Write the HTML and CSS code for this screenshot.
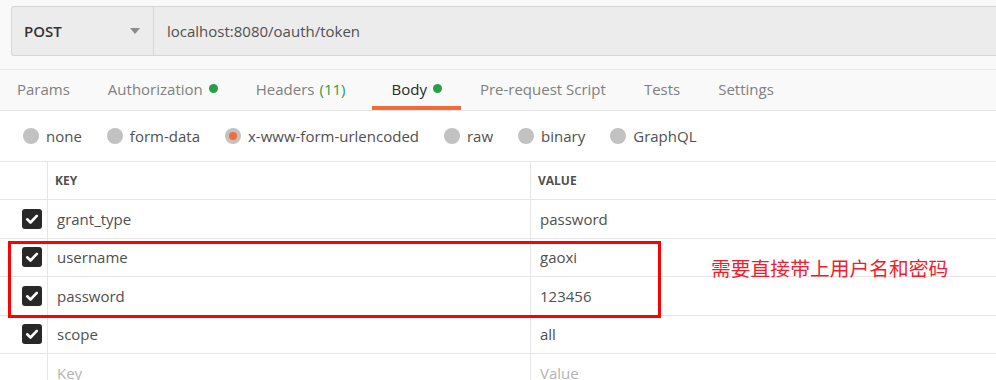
FILE: index.html
```html
<!DOCTYPE html>
<html lang="en">
  <head>
    <meta charset="UTF-8" />
    <title>Request</title>
    <link rel="stylesheet" href="styles.css">
  </head>
  <body>
    <div class="request">
      <div class="url-bar">
        <div class="method">
          <span>POST</span>
          <svg class="caret" width="10" height="6" viewBox="0 0 10 6"><path d="M0 0h10L5 6z" fill="#8c8c8c"/></svg>
        </div>
        <div class="url">localhost:8080/oauth/token</div>
      </div>
    </div>

    <nav class="tabs">
      <span class="tab first">Params</span>
      <span class="tab">Authorization <i class="dot"></i></span>
      <span class="tab headers">Headers <em class="count">(11)</em></span>
      <span class="tab active">Body <i class="dot"></i></span>
      <span class="tab">Pre-request Script</span>
      <span class="tab">Tests</span>
      <span class="tab">Settings</span>
    </nav>

    <div class="body-types">
      <label class="radio"><i class="circle"></i>none</label>
      <label class="radio"><i class="circle"></i>form-data</label>
      <label class="radio"><i class="circle checked"></i>x-www-form-urlencoded</label>
      <label class="radio"><i class="circle"></i>raw</label>
      <label class="radio"><i class="circle"></i>binary</label>
      <label class="radio"><i class="circle"></i>GraphQL</label>
    </div>

    <div class="kv">
      <div class="kv-row head">
        <div class="cell"></div>
        <div class="cell">KEY</div>
        <div class="cell">VALUE</div>
      </div>
      <div class="kv-row">
        <div class="cell check"><span class="box"><svg width="20" height="20" viewBox="0 0 20 20"><path d="M5.2 10.3l3.3 3.2 6.3-6.6" fill="none" stroke="#fff" stroke-width="2.6" stroke-linecap="round" stroke-linejoin="round"/></svg></span></div>
        <div class="cell">grant_type</div>
        <div class="cell">password</div>
      </div>
      <div class="kv-row">
        <div class="cell check"><span class="box"><svg width="20" height="20" viewBox="0 0 20 20"><path d="M5.2 10.3l3.3 3.2 6.3-6.6" fill="none" stroke="#fff" stroke-width="2.6" stroke-linecap="round" stroke-linejoin="round"/></svg></span></div>
        <div class="cell">username</div>
        <div class="cell">gaoxi</div>
      </div>
      <div class="kv-row">
        <div class="cell check"><span class="box"><svg width="20" height="20" viewBox="0 0 20 20"><path d="M5.2 10.3l3.3 3.2 6.3-6.6" fill="none" stroke="#fff" stroke-width="2.6" stroke-linecap="round" stroke-linejoin="round"/></svg></span></div>
        <div class="cell">password</div>
        <div class="cell">123456</div>
      </div>
      <div class="kv-row">
        <div class="cell check"><span class="box"><svg width="20" height="20" viewBox="0 0 20 20"><path d="M5.2 10.3l3.3 3.2 6.3-6.6" fill="none" stroke="#fff" stroke-width="2.6" stroke-linecap="round" stroke-linejoin="round"/></svg></span></div>
        <div class="cell">scope</div>
        <div class="cell">all</div>
      </div>
      <div class="kv-row">
        <div class="cell"></div>
        <div class="cell placeholder">Key</div>
        <div class="cell placeholder">Value</div>
      </div>
    </div>

    <!-- annotation drawn over the screenshot -->
    <div class="note-box"></div>
    <div class="note">需要直接带上用户名和密码</div>
  </body>
</html>
```

FILE: styles.css
```css
body {
  margin: 0;
  font-family: "Open Sans", "Liberation Sans", sans-serif;
  font-size: 15px;
  color: #505050;
  background: #fff;
  overflow: hidden;
}

.request {
  background: #f9f9f9;
  padding: 6px 0 13px 11px;
  border-bottom: 1px solid #e8e8e8;
}

.url-bar {
  display: flex;
  height: 50px;
  box-sizing: border-box;
  background: #ececec;
  border: 1px solid #d6d6d6;
  border-right: none;
  border-radius: 3px 0 0 3px;
}

.method {
  width: 142px;
  border-right: 1px solid #d6d6d6;
  display: flex;
  align-items: center;
  justify-content: space-between;
  padding: 0 12px 0 12px;
  box-sizing: border-box;
  font-weight: 600;
  color: #333;
}

.caret {
  margin-right: 1px;
}

.url {
  display: flex;
  align-items: center;
  padding-left: 13px;
  color: #505050;
}

.tabs {
  display: flex;
  height: 40px;
  background: #f9f9f9;
  border-bottom: 1px solid #e6e6e6;
}

.tab {
  position: relative;
  display: flex;
  align-items: center;
  padding: 0 19px 3px;
  color: #808080;
  white-space: nowrap;
}

.tab.first {
  padding-left: 17px;
}

.tab.headers {
  margin-right: 8px;
}

.tab.active {
  color: #282828;
}

.tab.active::after {
  content: "";
  position: absolute;
  left: 0;
  right: 0;
  bottom: 0;
  height: 4px;
  background: #f26b3a;
}

.dot {
  display: inline-block;
  width: 9px;
  height: 9px;
  border-radius: 50%;
  background: #26a047;
  margin-left: 6px;
}

.count {
  font-style: normal;
  color: #26a047;
  margin-left: 5px;
}

.body-types {
  display: flex;
  align-items: center;
  height: 50px;
  padding-left: 23px;
}

.radio {
  display: flex;
  align-items: center;
  margin-right: 25px;
  color: #505050;
}

.circle {
  width: 16px;
  height: 16px;
  border-radius: 50%;
  background: #c2c2c2;
  margin-right: 7px;
  display: flex;
  align-items: center;
  justify-content: center;
}

.circle.checked::after {
  content: "";
  width: 8px;
  height: 8px;
  border-radius: 50%;
  background: #f26b3a;
}

.kv {
  border-top: 1px solid #e6e6e6;
}

.kv-row {
  display: grid;
  grid-template-columns: 48px 483px 1fr;
  height: 37.5px;
  border-bottom: 1px solid #e6e6e6;
}

.kv-row.head {
  height: 37px;
}

.cell {
  display: flex;
  align-items: center;
  padding-left: 9px;
  border-right: 1px solid #e6e6e6;
}

.cell:last-child {
  border-right: none;
}

.head .cell {
  font-size: 12px;
  font-weight: 700;
  padding-left: 7px;
  color: #505050;
}

.cell.check {
  padding-left: 22px;
}

.box {
  width: 20px;
  height: 20px;
  border-radius: 3px;
  background: #282828;
}

.box svg {
  display: block;
}

.placeholder {
  color: #b3b3b3;
}

.note-box {
  position: absolute;
  left: 8px;
  top: 241px;
  width: 653px;
  height: 77px;
  box-sizing: border-box;
  border: 3px solid #f00;
}

.note {
  position: absolute;
  left: 711px;
  top: 256px;
  font-family: "Noto Sans CJK SC", sans-serif;
  font-size: 19.8px;
  line-height: 24px;
  color: #f41c2c;
}
```
